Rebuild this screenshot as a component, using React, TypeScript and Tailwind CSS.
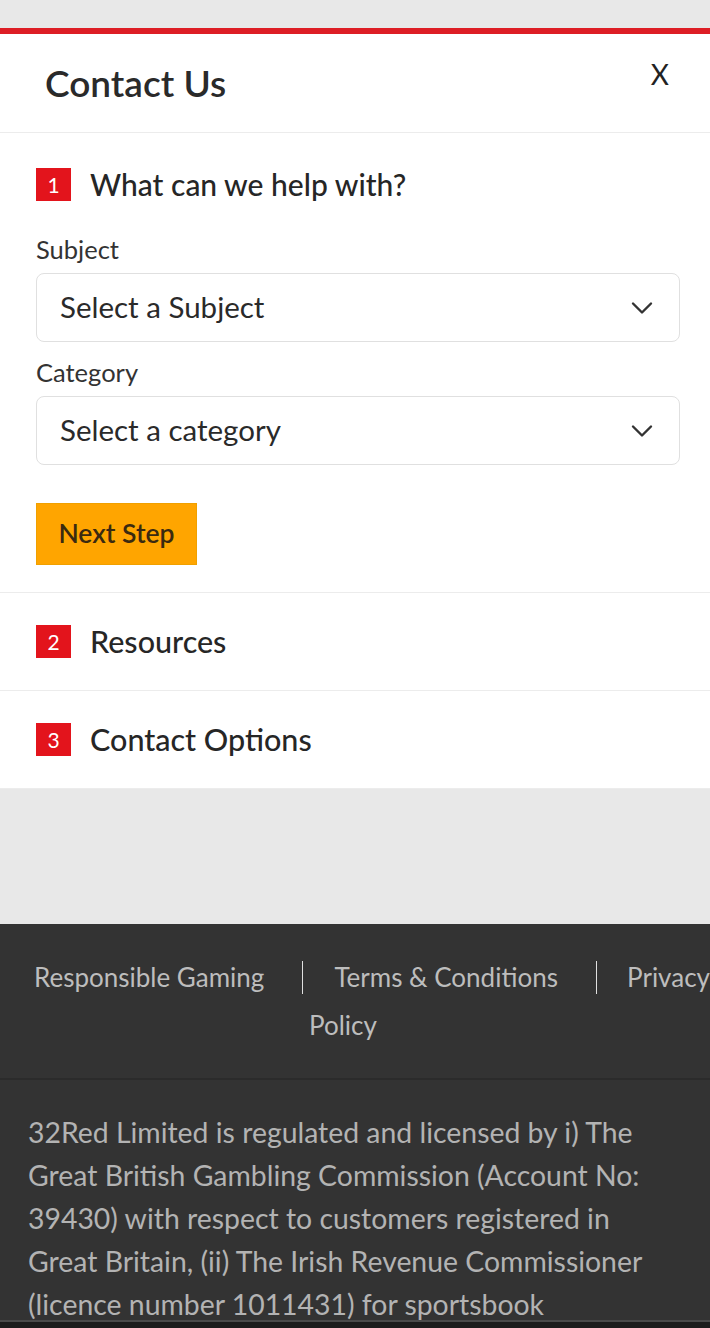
import { ChevronDown } from "lucide-react";

const font = { fontFamily: "Lato, 'Open Sans', sans-serif" };

function Badge({ n }: { n: number }) {
  return (
    <span className="flex h-[33px] w-[35px] shrink-0 items-center justify-center bg-[#e3141c] text-[21px] text-white">
      {n}
    </span>
  );
}

function SelectBox({ placeholder }: { placeholder: string }) {
  return (
    <div className="flex h-[69px] items-center justify-between rounded-[8px] border border-[#e0e0e0] bg-white pl-[23px] pr-[19px]">
      <span className="text-[29.5px] text-[#2a2a2a]">{placeholder}</span>
      <ChevronDown className="h-[36px] w-[36px] text-[#333]" strokeWidth={1.6} />
    </div>
  );
}

function StepRow({ n, title }: { n: number; title: string }) {
  return (
    <div className="flex h-[98px] items-center gap-[19px] border-b border-[#ececec] bg-white px-[36px]">
      <Badge n={n} />
      <h2 className="text-[30.5px] font-medium leading-[33px] text-[#262626]">{title}</h2>
    </div>
  );
}

export default function App() {
  return (
    <div className="min-h-[1328px] w-[710px] overflow-hidden bg-[#e8e8e8]" style={font}>
      <div className="h-[28px] bg-[#e8e8e8]" />
      <div className="h-[6px] bg-[#dd1e25]" />

      {/* Header */}
      <div className="flex h-[99px] items-center justify-between border-b border-[#ececec] bg-white pl-[45px] pr-[41px]">
        <h1 className="text-[37px] font-semibold text-[#2a2a2a]">Contact Us</h1>
        <span className="-mt-[18px] text-[28px] text-[#222]">X</span>
      </div>

      {/* Step 1 */}
      <div className="border-b border-[#ececec] bg-white pb-[27px] pl-[36px] pr-[30px] pt-[35px]">
        <div className="flex items-center gap-[19px]">
          <Badge n={1} />
          <h2 className="text-[30px] font-medium leading-[33px] text-[#262626]">What can we help with?</h2>
        </div>
        <div className="mt-[33px] text-[25.5px] leading-[30px] text-[#333]">Subject</div>
        <div className="mt-[9px]">
          <SelectBox placeholder="Select a Subject" />
        </div>
        <div className="mt-[15px] text-[25.5px] leading-[30px] text-[#333]">Category</div>
        <div className="mt-[9px]">
          <SelectBox placeholder="Select a category" />
        </div>
        <button className="mt-[38px] h-[62px] w-[161px] border border-[#f0a000] bg-[#ffa500] text-[26.5px] font-semibold text-[#3a2a10]">
          Next Step
        </button>
      </div>

      <StepRow n={2} title="Resources" />
      <StepRow n={3} title="Contact Options" />

      <div className="h-[135px]" />

      {/* Footer */}
      <footer className="bg-[#333333]">
        <div className="border-b-2 border-[#2b2b2b] pb-[36px] pt-[37px] text-[26px] leading-[33px] text-[#bdbdbd]">
          <div className="flex items-center whitespace-nowrap pl-[34px]">
            <span>Responsible Gaming</span>
            <span className="ml-[38px] mr-[31px] h-[33px] w-[2px] bg-[#e0e0e0]" />
            <span>Terms &amp; Conditions</span>
            <span className="ml-[38px] mr-[30px] h-[33px] w-[2px] bg-[#e0e0e0]" />
            <span>Privacy</span>
          </div>
          <div className="mt-[15px] pl-[309px]">Policy</div>
        </div>
        <p className="h-[240px] overflow-hidden px-[28px] pt-[31px] text-[28.4px] leading-[43px] text-[#b3b3b3]">
          32Red Limited is regulated and licensed by i) The Great British Gambling Commission (Account No: 39430) with
          respect to customers registered in Great Britain, (ii) The Irish Revenue Commissioner (licence number 1011431)
          for sportsbook
        </p>
        <div className="h-[2px] bg-[#4a4a4a]" />
        <div className="h-[10px] bg-[#1c1c1c]" />
      </footer>
    </div>
  );
}
